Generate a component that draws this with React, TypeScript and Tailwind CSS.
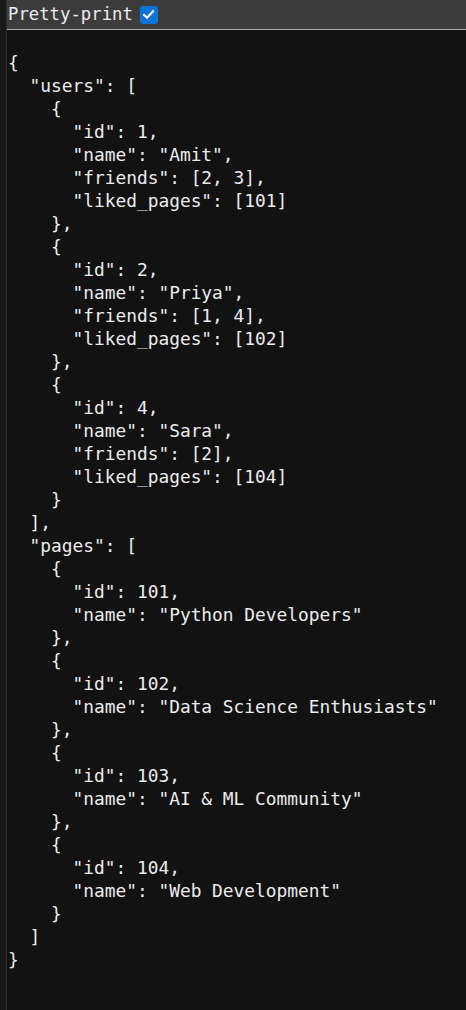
import React from "react";

const json = `{
  "users": [
    {
      "id": 1,
      "name": "Amit",
      "friends": [2, 3],
      "liked_pages": [101]
    },
    {
      "id": 2,
      "name": "Priya",
      "friends": [1, 4],
      "liked_pages": [102]
    },
    {
      "id": 4,
      "name": "Sara",
      "friends": [2],
      "liked_pages": [104]
    }
  ],
  "pages": [
    {
      "id": 101,
      "name": "Python Developers"
    },
    {
      "id": 102,
      "name": "Data Science Enthusiasts"
    },
    {
      "id": 103,
      "name": "AI & ML Community"
    },
    {
      "id": 104,
      "name": "Web Development"
    }
  ]
}`;

export default function App() {
  return (
    <div
      className="flex h-[1010px] w-[466px] overflow-hidden bg-[#121212] text-[#ececec]"
      style={{ fontFamily: '"DejaVu Sans Mono", "Liberation Mono", monospace' }}
    >
      <div className="w-[6px] shrink-0 bg-[#181818]" />
      <div className="w-px shrink-0 bg-[#2f2f2f]" />
      <div className="flex min-w-0 flex-1 flex-col">
        <div className="flex h-[30px] items-center gap-[7px] border-b border-[#b0b0b0] bg-[#3c3c3c] pl-[1px] text-[17.3px] leading-none">
          <span>Pretty-print</span>
          <span className="flex h-[18px] w-[18px] items-center justify-center rounded-[3px] bg-[#0b74d6]">
            <svg width="13" height="13" viewBox="0 0 16 16" fill="none">
              <path d="M2.5 8.5 L6.2 12 L13.5 4" stroke="white" strokeWidth="2.6" strokeLinecap="square" />
            </svg>
          </span>
        </div>
        <pre
          className="m-0 pt-[21px] pl-[1px] text-[17.85px] leading-[23px] whitespace-pre"
          style={{ fontFamily: '"DejaVu Sans Mono", "Liberation Mono", monospace' }}
        >
          {json}
        </pre>
      </div>
    </div>
  );
}
